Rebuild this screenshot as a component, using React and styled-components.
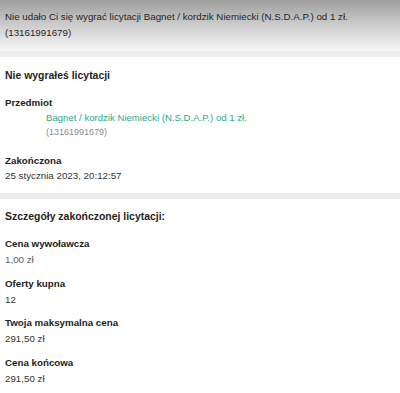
import React from "react";
import styled, { createGlobalStyle } from "styled-components";

const GlobalStyle = createGlobalStyle`
  html, body {
    margin: 0;
    padding: 0;
    background: #ffffff;
  }
  body {
    font-family: "Liberation Sans", Arial, sans-serif;
    color: #222;
  }
`;

const Header = styled.div`
  height: 51px;
  box-sizing: border-box;
  padding: 9px 5px 0;
  background: linear-gradient(to bottom, #9d9d9d 0%, #c9c9c9 45%, #f7f7f7 100%);
  font-size: 9.75px;
  line-height: 16px;
  color: #1f1f1f;
`;

const Gap = styled.div`
  height: 6px;
  background: #ededee;
`;

const Card = styled.section`
  background: #fff;
  padding: ${(p) => p.pad};
`;

const Title = styled.h2`
  margin: 0 0 ${(p) => p.mb}px;
  font-size: 10.45px;
  line-height: 16px;
  font-weight: 700;
  color: #1e1e1e;
`;

const Field = styled.div`
  margin-bottom: ${(p) => p.mb ?? 8.5}px;
`;

const Label = styled.div`
  font-size: 9.75px;
  line-height: ${(p) => p.lh ?? 16}px;
  font-weight: 700;
  color: #222;
`;

const Value = styled.div`
  font-size: 9.75px;
  line-height: 15px;
  color: ${(p) => (p.muted ? "#5c5c5c" : "#333")};
`;

const Item = styled.div`
  padding-left: 41px;
`;

const ItemLink = styled.a`
  display: block;
  font-size: 9.6px;
  line-height: 16px;
  color: #2ca98c;
  text-decoration: none;
`;

const ItemId = styled.div`
  font-size: 9px;
  line-height: 12px;
  color: #8a8a8a;
`;

const details = [
  { label: "Cena wywoławcza", value: "1,00 zł", muted: true },
  { label: "Oferty kupna", value: "12" },
  { label: "Twoja maksymalna cena", value: "291,50 zł" },
  { label: "Cena końcowa", value: "291,50 zł" },
];

export default function App() {
  return (
    <>
      <GlobalStyle />
      <Header>
        Nie udało Ci się wygrać licytacji Bagnet / kordzik Niemiecki (N.S.D.A.P.) od 1 zł.
        <br />
        (13161991679)
      </Header>
      <Gap />
      <Card pad="11px 5px 10px">
        <Title mb={11}>Nie wygrałeś licytacji</Title>
        <Field mb={15}>
          <Label lh={15}>Przedmiot</Label>
          <Item>
            <ItemLink href="#">Bagnet / kordzik Niemiecki (N.S.D.A.P.) od 1 zł.</ItemLink>
            <ItemId>(13161991679)</ItemId>
          </Item>
        </Field>
        <Field mb={0}>
          <Label lh={15}>Zakończona</Label>
          <Value>25 stycznia 2023, 20:12:57</Value>
        </Field>
      </Card>
      <Gap />
      <Card pad="10px 5px 8px">
        <Title mb={11}>Szczegóły zakończonej licytacji:</Title>
        {details.map((d) => (
          <Field key={d.label}>
            <Label>{d.label}</Label>
            <Value muted={d.muted}>{d.value}</Value>
          </Field>
        ))}
      </Card>
    </>
  );
}
